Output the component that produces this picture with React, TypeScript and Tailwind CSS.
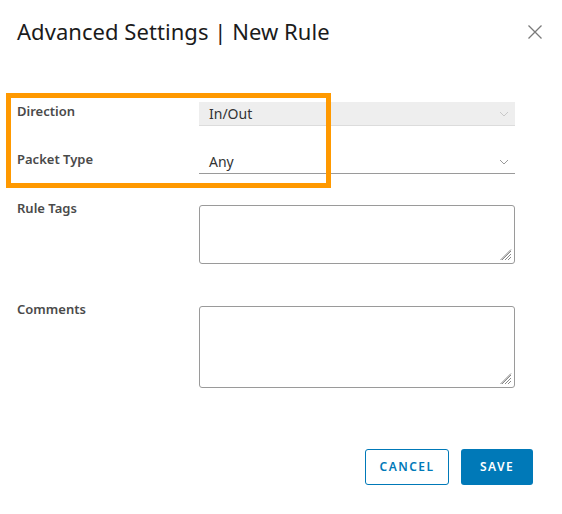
import React from "react";

function Chevron({ color }: { color: string }) {
  return (
    <svg width="10" height="6" viewBox="0 0 10 6" className="shrink-0">
      <path d="M1 1 L5 5 L9 1" fill="none" stroke={color} strokeWidth="1" />
    </svg>
  );
}

function Hatch() {
  return (
    <svg width="12" height="12" viewBox="0 0 12 12" className="absolute right-[2px] bottom-[2px]">
      <path d="M11 2 L2 11 M11 5 L5 11 M11 8 L8 11 M11 0.5 L0.5 11" stroke="#8a8a8a" strokeWidth="1" />
    </svg>
  );
}

const labelCls =
  "w-[182px] shrink-0 text-[13px] leading-[16px] font-semibold text-[#4a4a4a]";

export default function App() {
  return (
    <div
      className="relative w-[562px] h-[514px] bg-white overflow-hidden"
      style={{ fontFamily: '"Noto Sans", "Open Sans", sans-serif' }}
    >
      <div className="flex items-center justify-between pl-[17px] pr-[19px] pt-[15px]">
        <h1 className="text-[22px] leading-[32px] font-normal text-[#1b1b1b] tracking-[0.05px]">
          Advanced Settings | New Rule
        </h1>
        <svg width="16" height="16" viewBox="0 0 16 16" className="mt-[1px]">
          <path d="M1.5 1.5 L14.5 14.5 M14.5 1.5 L1.5 14.5" stroke="#7a7a7a" strokeWidth="1.3" />
        </svg>
      </div>

      <div className="flex flex-col pl-[17px] mt-[55px]">
        <div className="flex items-start h-[24px]">
          <div className={labelCls + " pt-[1px]"}>Direction</div>
          <div className="w-[316px] h-[24px] bg-[#eeeeee] border-b border-[#dcdcdc] flex items-center justify-between pl-[10px] pr-[6px]">
            <span className="text-[14px] text-[#333]">In/Out</span>
            <Chevron color="#c8c8c8" />
          </div>
        </div>

        <div className="flex items-start h-[24px] mt-[24px]">
          <div className={labelCls + " pt-[1px]"}>Packet Type</div>
          <div className="w-[316px] h-[24px] border-b border-[#9a9a9a] flex items-center justify-between pl-[10px] pr-[6px]">
            <span className="text-[14px] text-[#333]">Any</span>
            <Chevron color="#9a9a9a" />
          </div>
        </div>

        <div className="flex items-start mt-[26px]">
          <div className={labelCls}>Rule Tags</div>
          <div className="relative mt-[5px] w-[316px] h-[59px] border border-[#9a9a9a] rounded-[3px]">
            <Hatch />
          </div>
        </div>

        <div className="flex items-start mt-[37px]">
          <div className={labelCls}>Comments</div>
          <div className="relative mt-[5px] w-[316px] h-[82px] border border-[#9a9a9a] rounded-[3px]">
            <Hatch />
          </div>
        </div>

        <div className="flex justify-end gap-[12px] pr-[29px] mt-[61px]">
          <button className="w-[84px] h-[36px] border border-[#0079b8] rounded-[3px] text-[#0079b8] text-[12px] font-semibold tracking-[0.12em] bg-white">
            CANCEL
          </button>
          <button className="w-[72px] h-[36px] bg-[#0079b8] rounded-[3px] text-white text-[12px] font-semibold tracking-[0.12em]">
            SAVE
          </button>
        </div>
      </div>

      <div className="absolute left-[6px] top-[93px] w-[325px] h-[95px] border-[5px] border-[#ff9900] pointer-events-none" />
    </div>
  );
}
